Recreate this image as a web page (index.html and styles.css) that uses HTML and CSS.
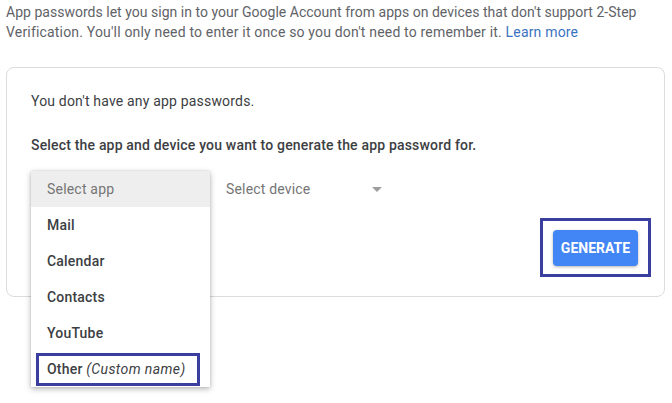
FILE: index.html
```html
<!DOCTYPE html>
<html>
<head>
<meta charset="utf-8">
<link rel="stylesheet" href="styles.css">
</head>
<body>
<p class="intro"><span class="line-one">App passwords let you sign in to your Google Account from apps on devices that don't support 2-Step</span><br>Verification. You'll only need to enter it once so you don't need to remember it. <a class="link" href="#">Learn more</a></p>
<div class="card">
  <p class="empty">You don't have any app passwords.</p>
  <p class="instr">Select the app and device you want to generate the app password for.</p>
  <div class="selects">
    <div class="app-select">
      <ul class="menu">
        <li class="item placeholder">Select app</li>
        <li class="item">Mail</li>
        <li class="item">Calendar</li>
        <li class="item">Contacts</li>
        <li class="item">YouTube</li>
        <li class="item other">Other <em class="custom">(Custom name)</em><span class="mark mark-other"></span></li>
      </ul>
    </div>
    <div class="device-select">
      <span class="device-label">Select device</span>
      <span class="arrow"></span>
    </div>
  </div>
  <div class="actions">
    <div class="btn-wrap">
      <button class="generate">GENERATE</button>
      <span class="mark mark-btn"></span>
    </div>
  </div>
</div>
</body>
</html>
```

FILE: styles.css
```css
html, body {
  margin: 0;
  padding: 0;
  background: #ffffff;
}
body {
  font-family: Roboto, "Liberation Sans", Arial, sans-serif;
  font-size: 14px;
  color: #5f6368;
  width: 672px;
  height: 403px;
  overflow: hidden;
}
.intro {
  margin: 0;
  padding: 2px 0 0 6px;
  line-height: 20px;
  color: #5f6368;
  white-space: nowrap;
  letter-spacing: 0.18px;
}
.line-one {
  letter-spacing: 0.02px;
}
.link {
  color: #3b72c0;
  text-decoration: none;
}
.card {
  margin: 25px 0 0 6px;
  width: 659px;
  border: 1px solid #dadce0;
  border-radius: 8px;
  padding: 23px 0 30px 24px;
  box-sizing: border-box;
  display: flex;
  flex-direction: column;
}
.empty {
  margin: 0;
  line-height: 20px;
  color: #3c4043;
  letter-spacing: 0.18px;
}
.instr {
  margin: 24px 0 0 0;
  line-height: 20px;
  color: #3c4043;
  font-weight: 500;
  letter-spacing: 0.18px;
}
.selects {
  margin-top: 16px;
  display: flex;
  gap: 16px;
  height: 36px;
}
.app-select {
  position: relative;
  width: 179px;
  height: 36px;
}
.menu {
  position: absolute;
  left: 0;
  top: 0;
  width: 179px;
  margin: 0;
  padding: 0;
  list-style: none;
  background: #fff;
  box-shadow: 0 2px 6px rgba(0,0,0,0.28), 0 0 2px rgba(0,0,0,0.12);
  z-index: 2;
}
.item {
  position: relative;
  height: 36px;
  line-height: 36px;
  padding-left: 16px;
  color: #3c4043;
  font-weight: 500;
  letter-spacing: 0.2px;
}
.placeholder {
  background: #eeeeee;
  color: #757575;
  font-weight: 400;
}
.custom {
  font-style: italic;
  font-weight: 400;
  color: #3c4043;
  letter-spacing: 0.4px;
}
.mark {
  position: absolute;
  border: 3px solid #3a3e9e;
  box-sizing: border-box;
  pointer-events: none;
}
.mark-other {
  left: 5px;
  top: 2px;
  width: 164px;
  height: 33px;
}
.device-select {
  width: 164px;
  display: flex;
  align-items: center;
  justify-content: space-between;
  padding-right: 8px;
  box-sizing: border-box;
}
.device-label {
  color: #757575;
  letter-spacing: 0.18px;
}
.arrow {
  width: 0;
  height: 0;
  border-left: 5px solid transparent;
  border-right: 5px solid transparent;
  border-top: 5px solid #9e9e9e;
  margin-top: 1px;
}
.actions {
  margin-top: 23px;
  display: flex;
  justify-content: flex-end;
  padding-right: 26px;
}
.btn-wrap {
  position: relative;
}
.generate {
  display: block;
  height: 36px;
  width: 85px;
  padding: 0;
  border: none;
  border-radius: 4px;
  background: #4285f4;
  color: #fff;
  font-family: Roboto, "Liberation Sans", Arial, sans-serif;
  font-size: 14px;
  font-weight: 700;
  letter-spacing: 0;
  box-shadow: 0 1px 3px rgba(0,0,0,0.3);
}
.mark-btn {
  left: -13px;
  right: -13px;
  top: -12px;
  bottom: -11px;
}
```
